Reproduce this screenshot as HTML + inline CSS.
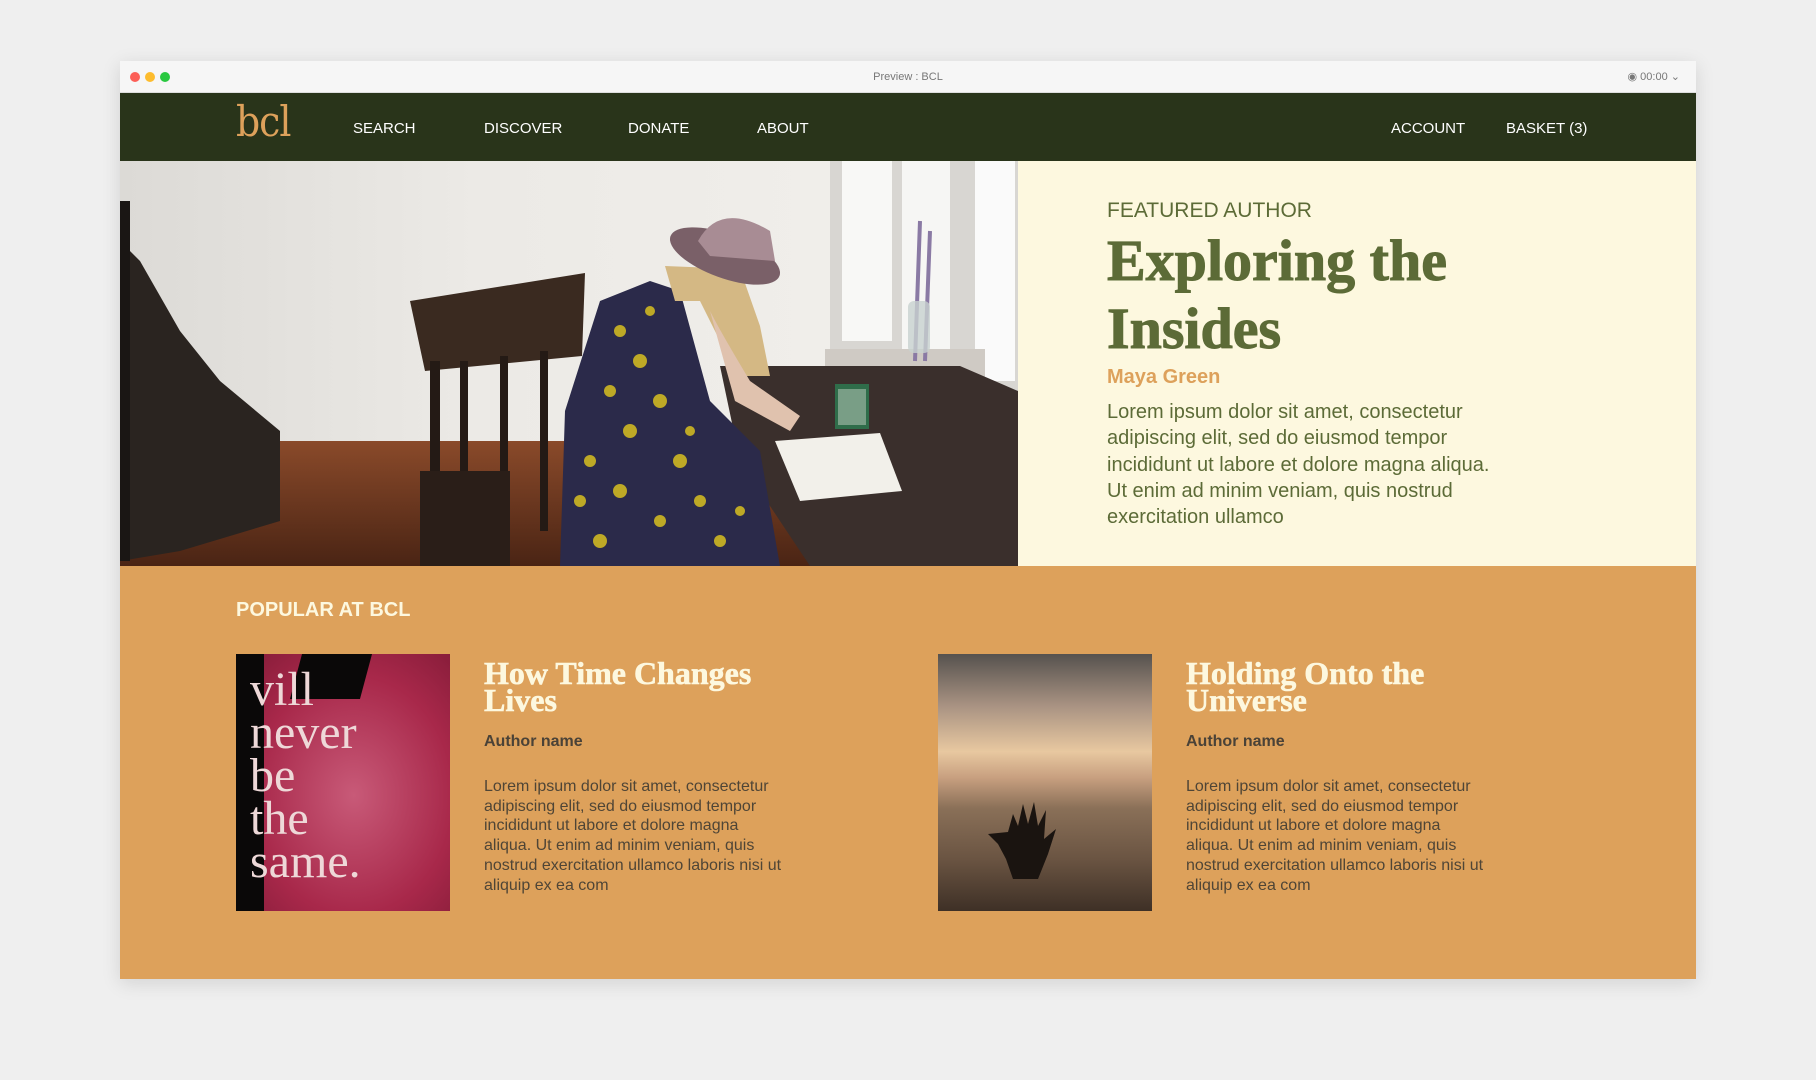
<!DOCTYPE html>
<html><head><meta charset="utf-8"><style>
*{margin:0;padding:0;box-sizing:border-box}
body{width:1816px;height:1080px;background:#efefef;position:relative;overflow:hidden;font-family:"Liberation Sans",Arial,sans-serif}
.win{position:absolute;left:120px;top:61px;width:1576px;height:918px;background:#dda15b;box-shadow:0 4px 18px rgba(0,0,0,.12)}
.tb{position:absolute;left:0;top:0;width:1576px;height:32px;background:#f6f6f6;border-bottom:1px solid #ddd}
.dot{position:absolute;top:11px;width:10px;height:10px;border-radius:50%}
.tb .t{position:absolute;left:0;width:100%;top:10px;text-align:center;font-size:11px;color:#777}
.nav{position:absolute;left:0;top:32px;width:1576px;height:68px;background:#29341a}
.nav a{position:absolute;top:27px;color:#fff;font-size:15px;text-decoration:none}
.logo{position:absolute;left:116px;top:4px;font-family:"DejaVu Serif","Liberation Serif",serif;font-stretch:condensed;font-size:42px;color:#dda15b;letter-spacing:-1px}
.hero{position:absolute;left:0;top:100px;width:1576px;height:405px;background:#fdf8df}
.ph{position:absolute;left:0;top:0}
.fa{position:absolute;left:987px;top:38px;color:#5c6b37;font-size:21px}
.h1{position:absolute;left:987px;top:66px;color:#5c6b37;font-family:"Liberation Serif",serif;font-weight:bold;font-size:58px;line-height:68px;width:500px;-webkit-text-stroke:1px #5c6b37}
.mg{position:absolute;left:987px;top:205px;color:#dda15b;font-size:20px;font-weight:bold}
.hp{position:absolute;left:987px;top:238px;color:#5c6b37;font-size:20px;line-height:26.3px;width:395px}
.pop{position:absolute;left:116px;top:538px;color:#fdf8df;font-weight:bold;font-size:20px}
.card{position:absolute;top:593px}
.img{position:absolute;left:0;top:0;width:214px;height:257px;overflow:hidden}
.ct{position:absolute;left:248px;top:6px;width:330px;color:#fdf8df;font-family:"Liberation Serif",serif;font-weight:bold;font-size:32px;line-height:27px;-webkit-text-stroke:.6px #fdf8df}
.an{position:absolute;left:248px;top:79px;color:#4a4237;font-weight:bold;font-size:16px;white-space:nowrap}
.cp{position:absolute;left:248px;top:123px;width:305px;color:#4f4536;font-size:16px;line-height:19.7px}
</style></head><body>
<div class="win">
 <div class="tb">
  <div class="dot" style="left:10px;background:#fc5f57"></div>
  <div class="dot" style="left:25px;background:#fdbc2e"></div>
  <div class="dot" style="left:40px;background:#29c840"></div>
  <div class="t">Preview : BCL</div>
  <div style="position:absolute;right:16px;top:9px;font-size:11px;color:#777">◉ 00:00 ⌄</div>
 </div>
 <div class="nav">
  <div class="logo">bcl</div>
  <a style="left:233px">SEARCH</a>
  <a style="left:364px">DISCOVER</a>
  <a style="left:508px">DONATE</a>
  <a style="left:637px">ABOUT</a>
  <a style="left:1271px">ACCOUNT</a>
  <a style="left:1386px">BASKET (3)</a>
 </div>
 <div class="hero">
  <svg class="ph" width="898" height="405" viewBox="0 0 898 405">
   <defs>
    <linearGradient id="wall" x1="0" x2="1"><stop offset="0" stop-color="#dcdad6"/><stop offset=".4" stop-color="#eceae6"/><stop offset="1" stop-color="#f2f0ec"/></linearGradient>
    <linearGradient id="fl" x1="0" y1="0" x2="0" y2="1"><stop offset="0" stop-color="#8a4a2a"/><stop offset="1" stop-color="#4a2414"/></linearGradient>
   </defs>
   <rect width="898" height="405" fill="url(#wall)"/>
   <rect x="0" y="280" width="898" height="125" fill="url(#fl)"/>
   <polygon points="0,80 20,100 60,170 100,220 160,270 160,360 60,390 0,400" fill="#2a2420"/>
   <rect x="0" y="40" width="10" height="360" fill="#1a1614"/>
   <rect x="710" y="0" width="188" height="230" fill="#d8d6d2"/>
   <rect x="722" y="0" width="50" height="180" fill="#f8f8f6"/>
   <rect x="782" y="0" width="48" height="190" fill="#f6f6f4"/>
   <rect x="855" y="0" width="40" height="220" fill="#fafafa"/>
   <rect x="705" y="188" width="160" height="50" fill="#cfcac4"/>
   <polygon points="600,205 840,205 898,230 898,405 690,405 620,300" fill="#3a2f2c"/>
   <polygon points="290,140 465,112 462,195 305,210" fill="#3a2a20"/>
   <rect x="310" y="200" width="10" height="190" fill="#241a15"/>
   <rect x="340" y="200" width="8" height="180" fill="#241a15"/>
   <rect x="380" y="195" width="8" height="180" fill="#241a15"/>
   <rect x="420" y="190" width="8" height="180" fill="#241a15"/>
   <rect x="300" y="310" width="90" height="95" fill="#2a1e18"/>
   <polygon points="530,120 560,130 590,240 640,290 660,405 440,405 445,250 480,140" fill="#2b2a4a"/>
   <g fill="#d8c020" opacity=".85">
    <circle cx="500" cy="170" r="6"/><circle cx="520" cy="200" r="7"/><circle cx="490" cy="230" r="6"/><circle cx="540" cy="240" r="7"/><circle cx="510" cy="270" r="7"/><circle cx="470" cy="300" r="6"/><circle cx="560" cy="300" r="7"/><circle cx="500" cy="330" r="7"/><circle cx="540" cy="360" r="6"/><circle cx="480" cy="380" r="7"/><circle cx="600" cy="380" r="6"/><circle cx="580" cy="340" r="6"/><circle cx="460" cy="340" r="6"/><circle cx="530" cy="150" r="5"/><circle cx="570" cy="270" r="5"/><circle cx="620" cy="350" r="5"/>
   </g>
   <polygon points="545,105 620,108 640,165 650,215 625,215 600,180 580,140 555,140" fill="#d4b884"/>
   <ellipse cx="605" cy="95" rx="58" ry="22" fill="#7a6068" transform="rotate(20 605 95)"/>
   <path d="M578 80 Q600 40 650 70 L655 100 L590 95Z" fill="#a88c94"/>
   <path d="M590 150 Q600 170 630 220 L680 255 L670 270 L615 240 Z" fill="#e0c2ae"/>
   <polygon points="655,280 760,272 782,330 680,340" fill="#f2f0ea"/>
   <rect x="715" y="223" width="34" height="45" fill="#2f6d4a"/>
   <rect x="718" y="228" width="28" height="36" fill="#e8e8e0" opacity=".4"/>
   <path d="M800 60 L795 200 M810 70 L805 200" stroke="#8a7aa4" stroke-width="4"/>
   <rect x="788" y="140" width="22" height="52" rx="6" fill="#c8d2d0" opacity=".8"/>
  </svg>
  <div class="fa">FEATURED AUTHOR</div>
  <div class="h1">Exploring the Insides</div>
  <div class="mg">Maya Green</div>
  <div class="hp">Lorem ipsum dolor sit amet, consectetur adipiscing elit, sed do eiusmod tempor incididunt ut labore et dolore magna aliqua. Ut enim ad minim veniam, quis nostrud exercitation ullamco</div>
 </div>
 <div class="pop">POPULAR AT BCL</div>
 <div class="card" style="left:116px">
  <div class="img" style="background:radial-gradient(ellipse at 55% 55%,#c85a78,#a8284a 60%,#801a36)">
   <div style="position:absolute;left:0;top:0;width:28px;height:257px;background:#0a0808"></div>
   <div style="position:absolute;left:60px;top:0;width:70px;height:45px;background:#0a0808;transform:skewX(-15deg)"></div>
   <div style="position:absolute;left:14px;top:14px;font-family:'Liberation Serif',serif;font-size:48px;line-height:43px;color:#eed8d8">vill<br>never<br>be<br>the<br>same.</div>
  </div>
  <div class="ct">How Time Changes Lives</div>
  <div class="an">Author name</div>
  <div class="cp">Lorem ipsum dolor sit amet, consectetur adipiscing elit, sed do eiusmod tempor incididunt ut labore et dolore magna aliqua. Ut enim ad minim veniam, quis nostrud exercitation ullamco laboris nisi ut aliquip ex ea com</div>
 </div>
 <div class="card" style="left:818px">
  <div class="img" style="background:linear-gradient(#56524e 0%,#a89282 20%,#e8c8a0 38%,#c8a080 48%,#8a7058 60%,#6a5442 80%,#3e3026 100%)">
   <svg width="214" height="257" style="position:absolute;left:0;top:0"><path d="M60 190 L50 180 L70 178 L75 160 L80 172 L85 150 L90 170 L96 148 L100 172 L108 156 L106 185 L118 175 L110 200 L100 225 L75 225 L68 205 Z" fill="#1a1410"/></svg>
  </div>
  <div class="ct">Holding Onto the Universe</div>
  <div class="an">Author name</div>
  <div class="cp">Lorem ipsum dolor sit amet, consectetur adipiscing elit, sed do eiusmod tempor incididunt ut labore et dolore magna aliqua. Ut enim ad minim veniam, quis nostrud exercitation ullamco laboris nisi ut aliquip ex ea com</div>
 </div>
</div>
</body></html>
